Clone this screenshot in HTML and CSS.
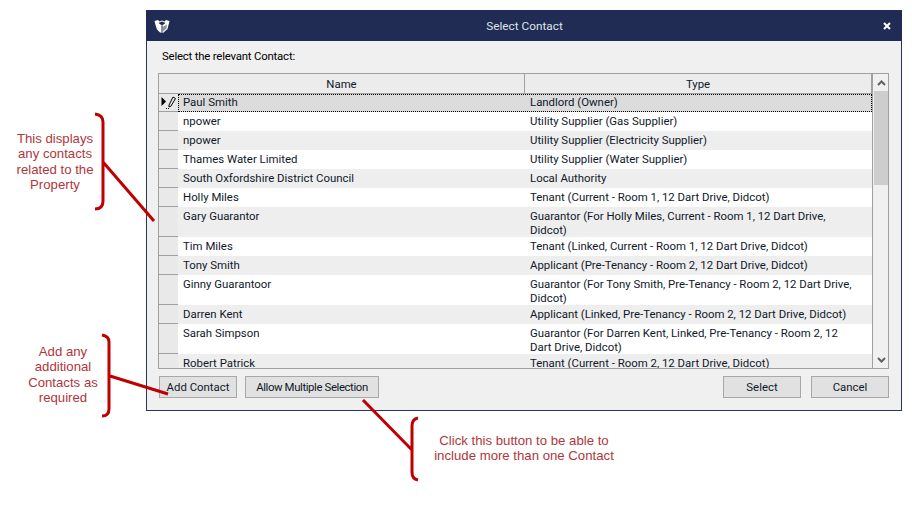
FILE: index.html
```html
<!DOCTYPE html>
<html lang="en">
<head>
<meta charset="utf-8">
<title>Select Contact</title>
<link rel="stylesheet" href="styles.css">
</head>
<body>
<main class="canvas">
  <section class="dialog">
    <header class="titlebar">
      <svg class="logo" viewBox="0 0 16 16" width="16" height="16"><path d="M0.500 3 L4 2 L5.500 3.500 L8 2.500 L10.500 3.500 L12 2 L15.500 3 L14.500 7 L13.500 11 L9 15 L6 14.500 L3 11.500 L1.500 7 Z" fill="#fff"/><path d="M4.500 5 L8 3.500 L11.500 5 L8 7.500 Z" fill="#202c54"/><path d="M8.500 9 L13 6.500 L12.500 10.500 L9 13.500 Z" fill="#8f95a8"/><path d="M8 7.500 V15" stroke="#202c54" stroke-width="1"/></svg>
      <h1 class="title">Select Contact</h1>
      <svg class="close" viewBox="0 0 8 8" width="8" height="8"><path d="M1 1 L7 7 M7 1 L1 7" stroke="#fff" stroke-width="2"/></svg>
    </header>
    <div class="body">
      <p class="prompt">Select the relevant Contact:</p>
      <div class="grid">
        <div class="table">
          <div class="row head">
            <div class="cell name">Name</div>
            <div class="cell type">Type</div>
          </div>
          <div class="row h18 selected">
            <div class="rowhead"><svg viewBox="0 0 17 14" width="17" height="14"><path d="M1.500 1 L6 5.500 L1.500 10 Z" fill="#000"/><path d="M13 1 L15.500 2.500 L11 10 L9 11 L9 9 Z" fill="none" stroke="#000"/><path d="M6 12.500 h1 M8 12.500 h1" stroke="#000"/></svg></div>
            <div class="focus"><div class="cell name">Paul Smith</div><div class="cell type">Landlord (Owner)</div></div>
          </div>
          <div class="row h19"><div class="rowhead"></div><div class="cell name">npower</div><div class="cell type">Utility Supplier (Gas Supplier)</div></div>
          <div class="row h19 alt"><div class="rowhead"></div><div class="cell name">npower</div><div class="cell type">Utility Supplier (Electricity Supplier)</div></div>
          <div class="row h19"><div class="rowhead"></div><div class="cell name">Thames Water Limited</div><div class="cell type">Utility Supplier (Water Supplier)</div></div>
          <div class="row h19 alt"><div class="rowhead"></div><div class="cell name">South Oxfordshire District Council</div><div class="cell type">Local Authority</div></div>
          <div class="row h19"><div class="rowhead"></div><div class="cell name">Holly Miles</div><div class="cell type">Tenant (Current - Room 1, 12 Dart Drive, Didcot)</div></div>
          <div class="row h30 alt"><div class="rowhead"></div><div class="cell name">Gary Guarantor</div><div class="cell type">Guarantor (For Holly Miles, Current - Room 1, 12 Dart Drive, Didcot)</div></div>
          <div class="row h19"><div class="rowhead"></div><div class="cell name">Tim Miles</div><div class="cell type">Tenant (Linked, Current - Room 1, 12 Dart Drive, Didcot)</div></div>
          <div class="row h19 alt"><div class="rowhead"></div><div class="cell name">Tony Smith</div><div class="cell type">Applicant (Pre-Tenancy - Room 2, 12 Dart Drive, Didcot)</div></div>
          <div class="row h30"><div class="rowhead"></div><div class="cell name">Ginny Guarantoor</div><div class="cell type">Guarantor (For Tony Smith, Pre-Tenancy - Room 2, 12 Dart Drive, Didcot)</div></div>
          <div class="row h19 alt"><div class="rowhead"></div><div class="cell name">Darren Kent</div><div class="cell type">Applicant (Linked, Pre-Tenancy - Room 2, 12 Dart Drive, Didcot)</div></div>
          <div class="row h30"><div class="rowhead"></div><div class="cell name">Sarah Simpson</div><div class="cell type">Guarantor (For Darren Kent, Linked, Pre-Tenancy - Room 2, 12 Dart Drive, Didcot)</div></div>
          <div class="row h19 alt"><div class="rowhead"></div><div class="cell name">Robert Patrick</div><div class="cell type">Tenant (Current - Room 2, 12 Dart Drive, Didcot)</div></div>
        </div>
        <div class="scrollbar">
          <svg class="arrow" viewBox="0 0 9 6" width="9" height="6"><path d="M1 5 L4.500 1.500 L8 5" fill="none" stroke="#606060" stroke-width="2"/></svg>
          <div class="thumb"></div>
          <div class="track"></div>
          <svg class="arrow" viewBox="0 0 9 6" width="9" height="6"><path d="M1 1 L4.500 4.500 L8 1" fill="none" stroke="#606060" stroke-width="2"/></svg>
        </div>
      </div>
      <div class="actions">
        <button class="btn">Add Contact</button>
        <button class="btn wide">Allow Multiple Selection</button>
        <span class="spacer"></span>
        <button class="btn">Select</button>
        <button class="btn">Cancel</button>
      </div>
    </div>
  </section>

  <svg class="callouts" width="912" height="520" viewBox="0 0 912 520">
    <path d="M95 114 Q103 115 103 122 V201 Q103 209 95 209 M103 162 L154 221"/>
    <path d="M102 335 Q109 336 109 342 V409 Q109 416 102 416 M110 376 L168 394"/>
    <path d="M418 418 Q412 419 412 426 V472 Q412 479 418 480 M363 400 L412 450"/>
  </svg>
  <p class="note note-a">This displays<br>any contacts<br>related to the<br>Property</p>
  <p class="note note-b">Add any<br>additional<br>Contacts as<br>required</p>
  <p class="note note-c">Click this button to be able to<br>include more than one Contact</p>
</main>
</body>
</html>
```
FILE: styles.css
```css
* { box-sizing: border-box; }
html, body { margin: 0; padding: 0; background: #fff; }
body { width: 912px; height: 520px; overflow: hidden; font-family: Roboto, "Liberation Sans", Arial, sans-serif; font-size: 11.4px; color: #000; }
.canvas { position: relative; width: 912px; height: 520px; padding: 10px 0 0 146px; }
.dialog { width: 756px; height: 401px; border: 1px solid #2b3558; border-top: 0; background: #f0f0f0; display: flex; flex-direction: column; }
.titlebar { height: 31px; background: #202c54; display: flex; align-items: center; padding: 0 9px 0 8px; color: #fff; margin: 0 -1px; }
.logo { flex: none; }
.title { flex: 1; margin: 0; font-size: 11.8px; font-weight: normal; text-align: center; color: #dfe2ea; padding-right: 4px; }
.close { flex: none; margin-right: 2px; }
.body { flex: 1; padding: 0 12px 0 11px; display: flex; flex-direction: column; }
.prompt { margin: 0; height: 32px; padding: 8px 0 0 4px; line-height: 14px; letter-spacing: -0.2px; }
.grid { height: 296px; border: 1px solid #a0a0a0; display: flex; background: #f0f0f0; overflow: hidden; }
.table { width: 713px; flex: none; overflow: hidden; }
.row { display: flex; background: #fff; }
.row.alt { background: #eee; }
.h18 { height: 18px; } .h19 { height: 19px; } .h30 { height: 30px; }
.rowhead { width: 19px; flex: none; background: #e9e9e9; border-bottom: 1px solid #a0a0a0; }
.rowhead svg { display: block; margin: 2px 0 0 1px; }
.cell { padding: 2px 17px 0 5px; line-height: 14px; color: #10182a; }
.name { width: 347px; flex: none; }
.type { flex: 1; }
.head { height: 20px; background: #ececec; border-bottom: 1px solid #a0a0a0; }
.head .cell { text-align: center; padding: 3px 0 0; border-right: 1px solid #a0a0a0; }
.head .name { width: 366px; }
.selected { background: #dcdcdc; }
.focus { flex: 1; display: flex; border: 1px dotted #000; margin-top: 0; }
.selected .cell { padding-left: 4px; padding-top: 0; }
.selected .name { width: 347px; }
.scrollbar { flex: 1; display: flex; flex-direction: column; align-items: center; padding: 0 1px; border-left: 1px solid #a0a0a0; }
.arrow { margin: 6px 0 5px; flex: none; }
.thumb { width: 15px; height: 94px; background: #cdcdcd; flex: none; }
.track { flex: 1; }
.actions { display: flex; gap: 8px; height: 22px; margin-top: 7px; padding-left: 1px; }
.btn { width: 78px; height: 22px; border: 1px solid #a8a8a8; background: #e1e1e1; font: inherit; color: #10182a; padding: 0 0 1px; }
.btn.wide { width: 134px; letter-spacing: -0.4px; }
.spacer { flex: 1; }
.btn + .spacer + .btn { margin-right: 2px; }
.callouts { position: absolute; left: 0; top: 0; pointer-events: none; }
.callouts path { fill: none; stroke: #c00000; stroke-width: 3; }
.note { position: absolute; margin: 0; text-align: center; color: #b0363a; font-family: "Liberation Sans", Arial, sans-serif; font-size: 13.2px; line-height: 15.300px; }
.note-a { left: 5px; top: 131px; width: 100px; }
.note-b { left: 13px; top: 344px; width: 100px; }
.note-c { left: 404px; top: 433px; width: 240px; }
```
